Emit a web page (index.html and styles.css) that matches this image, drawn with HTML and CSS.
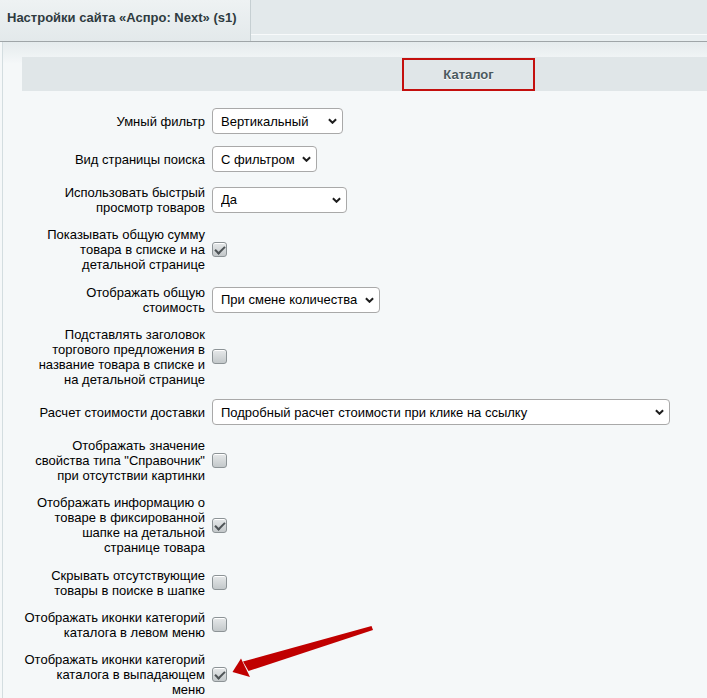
FILE: index.html
```html
<!DOCTYPE html>
<html lang="ru">
<head>
    <meta charset="UTF-8">
    <title>Настройки сайта «Аспро: Next» (s1)</title>
    <link rel="stylesheet" href="styles.css">
</head>
<body>

    <div class="tabs">
        <div class="tab">Настройки сайта «Аспро: Next» (s1)</div>
        <div class="tabs-fill"></div>
    </div>

    <div class="content">
        <div class="section-head"><span class="marked">Каталог</span></div>

        <div class="form">
            <label class="lbl">Умный фильтр</label>
            <div class="ctl">
                <span class="select-wrap">
                    <select class="sel sel-filter">
                        <option>Вертикальный</option>
                        <option>Горизонтальный</option>
                    </select>
                    <svg class="chev" viewBox="0 0 10 6"><path d="M1 1l4 4 4-4"/></svg>
                </span>
            </div>

            <label class="lbl">Вид страницы поиска</label>
            <div class="ctl">
                <span class="select-wrap">
                    <select class="sel sel-search">
                        <option>С фильтром</option>
                        <option>Без фильтра</option>
                    </select>
                    <svg class="chev" viewBox="0 0 10 6"><path d="M1 1l4 4 4-4"/></svg>
                </span>
            </div>

            <label class="lbl">Использовать быстрый просмотр товаров</label>
            <div class="ctl">
                <span class="select-wrap">
                    <select class="sel sel-fast">
                        <option>Да</option>
                        <option>Нет</option>
                    </select>
                    <svg class="chev" viewBox="0 0 10 6"><path d="M1 1l4 4 4-4"/></svg>
                </span>
            </div>

            <label class="lbl">Показывать общую сумму товара в списке и на детальной странице</label>
            <div class="ctl"><input type="checkbox" class="cb" checked></div>

            <label class="lbl">Отображать общую стоимость</label>
            <div class="ctl">
                <span class="select-wrap">
                    <select class="sel sel-total">
                        <option>При смене количества</option>
                        <option>Всегда</option>
                    </select>
                    <svg class="chev" viewBox="0 0 10 6"><path d="M1 1l4 4 4-4"/></svg>
                </span>
            </div>

            <label class="lbl">Подставлять заголовок торгового предложения в название товара в списке и на детальной странице</label>
            <div class="ctl"><input type="checkbox" class="cb"></div>

            <label class="lbl">Расчет стоимости доставки</label>
            <div class="ctl">
                <span class="select-wrap">
                    <select class="sel sel-delivery">
                        <option>Подробный расчет стоимости при клике на ссылку</option>
                        <option>Не показывать</option>
                    </select>
                    <svg class="chev" viewBox="0 0 10 6"><path d="M1 1l4 4 4-4"/></svg>
                </span>
            </div>

            <label class="lbl">Отображать значение свойства типа "Справочник" при отсутствии картинки</label>
            <div class="ctl"><input type="checkbox" class="cb"></div>

            <label class="lbl">Отображать информацию о товаре в фиксированной шапке на детальной странице товара</label>
            <div class="ctl"><input type="checkbox" class="cb" checked></div>

            <label class="lbl">Скрывать отсутствующие товары в поиске в шапке</label>
            <div class="ctl"><input type="checkbox" class="cb"></div>

            <label class="lbl">Отображать иконки категорий каталога в левом меню</label>
            <div class="ctl"><input type="checkbox" class="cb"></div>

            <label class="lbl">Отображать иконки категорий каталога в выпадающем меню</label>
            <div class="ctl"><input type="checkbox" class="cb" checked></div>
        </div>
    </div>

    <!-- стрелка-указатель на последний флажок -->
    <svg class="pointer" width="707" height="698" viewBox="0 0 707 698">
        <path d="M371.5 626 L243 661.5 L248.5 671 L373 630 Z" fill="#c00000"/>
        <path d="M232.5 672 L241 658.5 L250 677 Z" fill="#c00000"/>
    </svg>

</body>
</html>
```

FILE: styles.css
```css
html, body { overflow: hidden; }
body { margin: 0; height: 698px; background: #f5f8f9; font-family: "Liberation Sans", Arial, sans-serif; font-size: 13px; color: #000; }

/* вкладки */
.tabs { display: flex; height: 41px; background: #e8eef0; border-bottom: 1px solid #9fa5a8; }
.tab { width: 243px; padding-left: 7px; border-right: 1px solid #c6cfd2; background: linear-gradient(#eef2f3, #e3e9eb); font-weight: bold; color: #2f3b3f; line-height: 36px; }
.tabs-fill { flex: 1; height: 34px; background: #e3e9eb; border-bottom: 1px solid #f8fafb; }

/* основная область */
.content { overflow: hidden; height: 656px; margin-left: 2px; border-left: 1px solid #d3dde0; padding: 15px 0 0 19px; background: linear-gradient(#e5ebed, #f5f8f9 22px); }
.section-head { width: 893px; height: 34px; background: #e0e6e8; display: flex; justify-content: center; align-items: center; }
.marked { box-sizing: border-box; width: 133px; height: 33px; margin-top: 1px; border: 2px solid #c4100e; text-align: center; line-height: 29px; font-weight: bold; color: #4b5a5f; text-shadow: 0 1px 0 #fff; }

/* строки формы */
.form { display: grid; grid-template-columns: 190px auto; row-gap: 12.4px; margin-top: 17px; align-items: center; }
.lbl { box-sizing: border-box; padding: 0 7px 0 1px; text-align: right; line-height: 15px; }
.ctl { display: flex; align-items: center; }

.select-wrap { position: relative; display: inline-block; }
.sel { appearance: none; box-sizing: border-box; height: 26px; padding: 0 20px 0 8px; border: 1px solid #a9a9a9; border-radius: 4px; background: #fff; font-family: inherit; font-size: 13px; color: #000; display: block; }
.chev { position: absolute; right: 6px; top: 10px; width: 9px; height: 6px; fill: none; stroke: #1e1e1e; stroke-width: 2.2; pointer-events: none; }
.sel-filter { width: 131px; }
.sel-search { width: 105px; }
.sel-fast { width: 135px; }
.sel-total { width: 168px; }
.sel-delivery { width: 458px; }

/* флажки */
.cb { appearance: none; position: relative; margin: 0; width: 15px; height: 15px; border: 1px solid #8c9396; border-radius: 3px; background: linear-gradient(#e6e9ea, #c3c8ca); box-shadow: inset 0 1px 0 #fff; }
.cb:checked::after { content: ""; position: absolute; left: 4px; top: 1px; width: 4px; height: 8px; border: solid #4d5356; border-width: 0 2px 2px 0; transform: rotate(45deg); }

.pointer { position: absolute; left: 0; top: 0; pointer-events: none; }
```
